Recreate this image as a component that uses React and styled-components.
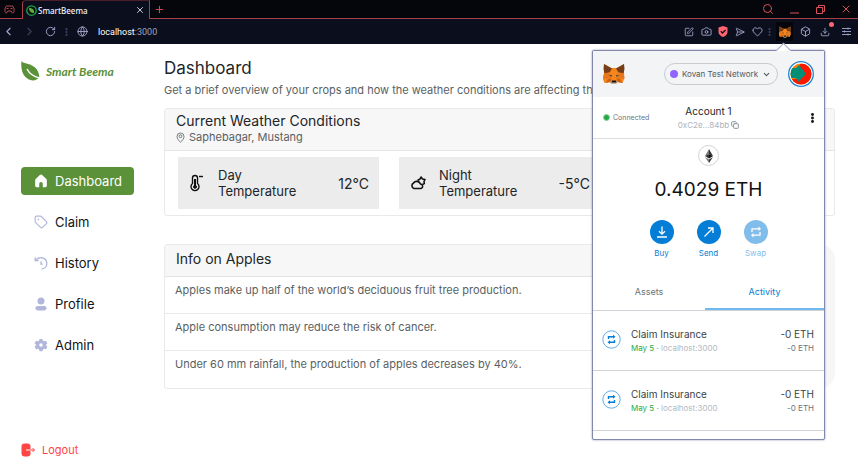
import React from "react";
import styled, { createGlobalStyle, css } from "styled-components";
import {
  Search, Copy, X, Plus, ChevronLeft, ChevronRight, ChevronDown, RotateCw,
  Globe, SquarePen, Camera, SendHorizontal, Heart, Box, Download, Tag,
} from "lucide-react";

const Global = createGlobalStyle`
  * { box-sizing: border-box; }
  body { margin: 0; background: #fff; font-family: Inter, "Open Sans", sans-serif; color: #212529; }
  button { font: inherit; color: inherit; background: none; border: 0; padding: 0; margin: 0; cursor: pointer; }
  a { color: inherit; text-decoration: none; }
  h1, h2, p, ul, dl, dd, dt { margin: 0; padding: 0; font-weight: 400; }
  ul { list-style: none; }
  svg { display: block; flex: none; }
`;

const Page = styled.div`
  position: relative;
  display: flex;
  flex-direction: column;
  min-height: 100vh;
`;

/* ---------- browser chrome ---------- */

const TabStrip = styled.div`
  display: flex;
  height: 19px;
  background: #05060b;
  font-family: "Noto Sans", sans-serif;
`;

const Workspace = styled.button`
  && { width: 22px; padding-right: 4px; border-bottom: 1px solid #a8404a; }
  display: grid;
  place-items: center;
`;

const Tab = styled.div`
  display: flex;
  align-items: center;
  gap: 1px;
  width: 128px;
  padding: 0 4px 0 3px;
  background: #0b0e1c;
  border: 1px solid #a8404a;
  border-top-color: #4b1f2a;
  border-bottom: 0;
  border-radius: 4px 0 0 0;
  color: #f2f2f6;
  font-size: 8px;
  font-weight: 500;
`;

const TabTitle = styled.span`
  flex: 1;
`;

const StripRest = styled.div`
  display: flex;
  flex: 1;
  align-items: center;
  justify-content: space-between;
  padding: 0 6px 0 3px;
  border-bottom: 1px solid #a8404a;
  color: #d9505c;
`;

const WindowButtons = styled.div`
  display: flex;
  gap: 14px;
`;

const IconButton = styled.button`
  display: grid;
  place-items: center;
  width: ${(p) => p.$w || 12}px;
  height: 16px;
`;

const Toolbar = styled.div`
  display: flex;
  align-items: center;
  justify-content: space-between;
  height: 25px;
  padding: 0 4px 0 2px;
  background: #0b0e1c;
  color: #a3a9cf;
`;

const ToolGroup = styled.div`
  display: flex;
  align-items: center;
  gap: ${(p) => p.$gap || 0}px;
`;

const Address = styled.span`
  margin-left: 1px;
  font: 9px Roboto, sans-serif;
  color: #9da2c4;
  b { font-weight: 400; color: #fff; }
`;

const Badge = styled.span`
  position: relative;
  display: grid;
  place-items: center;
  &::after {
    content: "";
    position: absolute;
    top: -5px;
    right: -4px;
    width: 5px;
    height: 5px;
    border-radius: 50%;
    background: #ff6470;
  }
`;

const FoxSlot = styled.button`
  && { background: #05060b; }
  display: grid;
  place-items: center;
  width: 17px;
  height: 19px;
`;

/* ---------- application ---------- */

const Layout = styled.div`
  display: grid;
  grid-template-columns: 164px 1fr;
  flex: 1;
`;

const Sidebar = styled.aside`
  display: flex;
  flex-direction: column;
  align-items: flex-start;
  padding: 16px 0 16px 21px;
`;

const Brand = styled.a`
  display: flex;
  align-items: center;
  gap: 6px;
  height: 22px;
  margin-bottom: 85px;
  color: #5a9139;
  font: italic 700 12px Lato, sans-serif;
`;

const Nav = styled.nav`
  display: flex;
  flex-direction: column;
  gap: 13px;
`;

const NavLink = styled.a`
  display: flex;
  align-items: center;
  gap: 7px;
  width: 113px;
  height: 28px;
  padding-left: 13px;
  border-radius: 4px;
  font-size: 13px;
  color: #111418;
  svg { color: #b1b7dc; }
  ${(p) => p.$active && css`
    background: #5a9139;
    color: #fff;
    svg { color: #fff; }
  `}
`;

const Logout = styled.button`
  && { color: #ff4545; font-size: 11px; }
  display: flex;
  align-items: center;
  gap: 7px;
  margin-top: auto;
  height: 20px;
`;

const Main = styled.main`
  min-width: 0;
  padding: 12px 23px 0 0;
`;

const Title = styled.h1`
  font-size: 17px;
  line-height: 24px;
`;

const Lead = styled.p`
  margin-bottom: 8px;
  font-size: 11px;
  line-height: 20px;
  color: #5a5f63;
  white-space: nowrap;
  overflow: hidden;
`;

const Card = styled.section`
  border: 1px solid #e9e9e9;
  border-radius: 3px;
  background: #fff;
`;

const CardHead = styled.header`
  padding: 3px 11px 6px;
  background: #f7f7f7;
  border-bottom: 1px solid #e4e4e4;
`;

const CardTitle = styled.h2`
  font-size: 14px;
  line-height: 18px;
`;

const InfoTitle = styled(CardTitle)`
  line-height: 22px;
`;

const Place = styled.p`
  display: flex;
  align-items: center;
  gap: 4px;
  font-size: 11px;
  line-height: 14px;
  color: #5a5f63;
`;

const Tiles = styled.div`
  display: grid;
  grid-template-columns: repeat(3, 1fr);
  gap: 20px;
  padding: 6px 13px;
`;

const Tile = styled.dl`
  display: flex;
  align-items: center;
  height: 52px;
  padding: 0 10px;
  background: #ececec;
  dt { flex: 1; margin-left: 12px; font-size: 13px; line-height: 16px; }
  dd { font-size: 14px; }
`;

const Lower = styled.div`
  display: grid;
  grid-template-columns: 2fr 1fr;
  gap: 20px;
  margin-top: 28px;
`;

const Facts = styled.ul`
  li {
    height: 37px;
    padding: 5px 10px;
    font-size: 11px;
    line-height: 16px;
    color: #5a5f63;
  }
  li:not(:last-child) { border-bottom: 1px solid #e9e9e9; }
`;

const SidePanel = styled.div`
  border-radius: 16px;
  background: #f6f6f6;
`;

/* ---------- wallet popup ---------- */

const Popup = styled.section`
  position: absolute;
  top: 50px;
  right: 33px;
  width: 233px;
  border: 1px solid #8187ad;
  border-radius: 2px;
  background: #fff;
  box-shadow: 0 0 2px #8187ad;
  &::before {
    content: "";
    position: absolute;
    top: -6px;
    right: 35px;
    width: 10px;
    height: 10px;
    background: #fff;
    border: solid #a3a8c6;
    border-width: 1px 0 0 1px;
    transform: rotate(45deg);
  }
`;

const PopupHead = styled.header`
  position: relative;
  display: flex;
  align-items: center;
  height: 46px;
  padding: 0 10px;
  background: #f2f4f6;
`;

const Network = styled.button`
  && {
    display: flex;
    align-items: center;
    justify-content: space-between;
    width: 114px;
    height: 22px;
    margin: 0 10px 0 auto;
    padding: 0 6px 0 5px;
    border: 1px solid #c8cbd0;
    border-radius: 11px;
    font-size: 8px;
    color: #535a61;
  }
  &::before {
    content: "";
    width: 8px;
    height: 8px;
    border-radius: 50%;
    background: #9064ff;
  }
`;

const Account = styled.div`
  display: grid;
  grid-template-columns: 60px 1fr 60px;
  align-items: center;
  height: 42px;
  padding: 0 10px;
  border-bottom: 1px solid #d9dce0;
`;

const Connected = styled.span`
  display: flex;
  align-items: center;
  gap: 3px;
  font-size: 7px;
  color: #6a737d;
  &::before {
    content: "";
    width: 5px;
    height: 5px;
    border: 1px solid #8bd69c;
    border-radius: 50%;
    background: #28a745;
  }
`;

const AccountName = styled.button`
  && { font-size: 10px; line-height: 15px; color: #24272a; }
  small {
    display: flex;
    align-items: center;
    justify-content: center;
    gap: 2px;
    font-size: 8px;
    line-height: 13px;
    color: #aeb3ba;
  }
  small svg { color: #8a9199; }
`;

const MoreButton = styled.button`
  justify-self: end;
`;

const Overview = styled.div`
  display: flex;
  flex-direction: column;
  align-items: center;
  padding-top: 6px;
`;

const Coin = styled.span`
  display: grid;
  place-items: center;
  width: 21px;
  height: 21px;
  border: 1px solid #cfd2d6;
  border-radius: 50%;
`;

const Balance = styled.p`
  margin-top: 8px;
  font-size: 19px;
  line-height: 32px;
  color: #111;
`;

const Actions = styled.div`
  display: flex;
  justify-content: center;
  gap: 7px;
  margin-top: 14px;
`;

const Action = styled.button`
  && {
    display: flex;
    flex-direction: column;
    align-items: center;
    gap: 3px;
    width: 40px;
    font-size: 8px;
    line-height: 12px;
    color: #037dd6;
    opacity: ${(p) => (p.disabled ? 0.5 : 1)};
  }
  span {
    display: grid;
    place-items: center;
    width: 24px;
    height: 24px;
    border-radius: 50%;
    background: #037dd6;
    color: #fff;
  }
`;

const Tabs = styled.div`
  display: grid;
  grid-template-columns: 112px 1fr;
  margin-top: 17px;
  border-bottom: 1px solid #cfd2d6;
`;

const TabButton = styled.button`
  && {
    height: 34px;
    padding-bottom: 2px;
    font-size: 9px;
    color: ${(p) => (p.$active ? "#037dd6" : "#6a737d")};
    border-bottom: 2px solid ${(p) => (p.$active ? "#6fb9ee" : "transparent")};
  }
`;

const Entry = styled.li`
  display: flex;
  align-items: flex-start;
  height: 60px;
  padding: 16px 10px 0 9px;
  border-bottom: 1px solid #cfd2d6;
  & > svg { margin-top: 3px; }
`;

const EntryText = styled.div`
  flex: 1;
  margin-left: 10px;
  font-size: 10px;
  line-height: 15px;
  color: #3a3f44;
  small { display: block; font-size: 8px; line-height: 13px; color: #b4b8be; }
  em { font-style: normal; color: #28a745; }
`;

const EntryAmount = styled(EntryText)`
  flex: none;
  text-align: right;
  small { color: #6a737d; }
`;

const PopupFoot = styled.div`
  height: 8px;
`;

/* ---------- drawings ---------- */

const Fox = ({ size }) => (
  <svg width={size} height={size} viewBox="0 0 22 22" aria-hidden="true">
    <path fill="#f6851b" d="M1 1 8 5h6l7-4v9l.5 5-2 5-4.500-1-3 2h-3l-3-2-4.500 1-2-5L1 10z" />
    <path fill="#763d16" d="M1 1 9 5.500 6.500 9.500 1.500 10.500.5 6zM21 1l-8 4.500 2.500 4 5 1 1-4.500z" />
    <path fill="#e4761b" d="m6 9.500 2.500 6H.5L2 10zM16 9.500l-2.500 6h8L20 10z" />
    <path fill="#cd6116" d="m8.500 15.500-1 3.500-5 .9L5 16zM13.500 15.500l1 3.500 5 .9L17 16z" />
    <path fill="#3a3f4c" d="m6 12.500 2.500-.8.500 2zM16 12.500l-2.500-.8-.5 2z" />
    <path fill="#c0ad9e" d="m7 18 2 .5h4l2-.5-2 3H9z" />
    <path fill="#161616" d="M9 17.500h4l.5 2h-5z" />
  </svg>
);

const Pad = () => (
  <svg width="11" height="9" viewBox="0 0 22 18" fill="none" stroke="#b8474f" strokeWidth="2" aria-hidden="true">
    <path d="M5 2h12l3 5v6c0 2-1 3-3 3l-3-4H8l-3 4c-2 0-3-1-3-3V7z" />
    <path d="M5 7h4M13 7h4" />
  </svg>
);

const Leaf = () => (
  <svg width="19" height="20" viewBox="0 0 19 20" aria-hidden="true">
    <path fill="#5a9139" d="M.5 0C2 2.500 6 2 10 4c5 2.300 8 6 8.300 12-2 3-5.500 4.200-9 3C3.500 17-.8 11 .5 0z" />
    <path d="M6 8c2 4 6 7.500 12.500 9" stroke="#fff" strokeWidth="1.500" fill="none" />
  </svg>
);

const Favicon = () => (
  <svg width="11" height="11" viewBox="0 0 22 22" aria-hidden="true">
    <circle cx="11" cy="11" r="9.500" fill="#07120c" stroke="#1fa84f" strokeWidth="2.500" />
    <path fill="#5fae3c" d="M6 6c7 0 11 3 10 10C10 16 6 13 6 6z" />
  </svg>
);

const Shield = () => (
  <svg width="10" height="11" viewBox="0 0 20 22" aria-hidden="true">
    <path fill="#ff6470" d="m10 0 9 3v9c0 5-4 8-9 10-5-2-9-5-9-10V3z" />
    <path d="m5.500 10.500 3.500 3.500 6-6" fill="none" stroke="#0b0e1c" strokeWidth="2.500" />
  </svg>
);

const Sliders = () => (
  <svg width="9" height="9" viewBox="0 0 18 18" stroke="currentColor" strokeWidth="1.800" aria-hidden="true">
    <path d="M0 3h18M0 9h18M0 15h18M12 1v4M5 7v4M12 13v4" />
  </svg>
);

const Dots = ({ size, color }) => (
  <svg width="3" height={size} viewBox="0 0 3 10" fill={color} aria-hidden="true">
    <circle cx="1.500" cy="1.500" r="1.400" />
    <circle cx="1.500" cy="5" r="1.400" />
    <circle cx="1.500" cy="8.500" r="1.400" />
  </svg>
);

const Home = () => (
  <svg width="14" height="14" viewBox="0 0 24 24" fill="currentColor" aria-hidden="true">
    <path d="M10 1.800 2.800 8.500C2.300 9 2 9.800 2 10.500V20c0 1.500 1 2.500 2.500 2.500H9v-6a3 3 0 0 1 6 0v6h4.500c1.500 0 2.500-1 2.500-2.500v-9.500c0-.7-.3-1.500-.8-2L14 1.800a3 3 0 0 0-4 0z" />
  </svg>
);

const HistoryIcon = () => (
  <svg width="14" height="14" viewBox="0 0 24 24" fill="none" stroke="currentColor" strokeWidth="2.200" aria-hidden="true">
    <path d="M2 2v6h6M3 8c2.500-4 6-5.500 10-5 5 .8 9 4.500 9 10 0 5-4 9-9 9.500" />
    <path d="M12 9v5h3" />
  </svg>
);

const Person = () => (
  <svg width="14" height="14" viewBox="0 0 24 24" fill="currentColor" aria-hidden="true">
    <circle cx="12" cy="7" r="6" />
    <rect x="2.500" y="15.500" width="19" height="7.500" rx="3.700" />
  </svg>
);

const Gear = () => (
  <svg width="14" height="14" viewBox="0 0 24 24" fill="currentColor" aria-hidden="true">
    <path fillRule="evenodd" d="M9.500 1.500h5l.8 3 2.200 1.200 3-.8 2.500 4.200-2.200 2.200v1.400l2.200 2.200-2.500 4.200-3-.8-2.200 1.200-.8 3h-5l-.8-3-2.200-1.200-3 .8L1 14.900l2.200-2.200v-1.400L1 9.100l2.500-4.200 3 .8 2.200-1.200zM12 9a3 3 0 1 0 0 6 3 3 0 0 0 0-6z" />
  </svg>
);

const Exit = () => (
  <svg width="14" height="14" viewBox="0 0 28 28" fill="none" aria-hidden="true">
    <rect x="1" y="1" width="18" height="26" rx="6" fill="#ff4545" />
    <path d="M10 14h9" stroke="#fff" strokeWidth="2" />
    <path d="M19 14h8m-4-4 4 4-4 4" stroke="#ff4545" strokeWidth="2" />
  </svg>
);

const Pin = () => (
  <svg width="9" height="11" viewBox="0 0 18 22" fill="none" stroke="#5a5f63" strokeWidth="1.600" aria-hidden="true">
    <path d="M9 20.500C5 17 2 13 2 9a7 7 0 0 1 14 0c0 4-3 8-7 11.500z" />
    <circle cx="9" cy="8.500" r="2.800" />
  </svg>
);

const Thermometer = () => (
  <svg width="18" height="18" viewBox="0 0 18 18" fill="none" stroke="#111" aria-hidden="true">
    <path d="M4.500 9.500V4a2.500 2.500 0 0 1 5 0v5.500a4 4 0 1 1-5 0z" strokeWidth="1.400" />
    <path d="M7 5v8" strokeWidth="2" />
    <circle cx="7" cy="12.800" r="1.500" fill="#111" />
    <path d="M11 2.500h4" strokeWidth="1.400" />
  </svg>
);

const CloudSun = () => (
  <svg width="18" height="18" viewBox="0 0 18 18" fill="none" stroke="#111" strokeWidth="1.600" strokeLinejoin="round" aria-hidden="true">
    <path d="M5 14.500a3 3 0 0 1-.5-5.500A4 4 0 0 1 11.500 10a2.300 2.300 0 0 1 .5 4.500z" />
    <path d="M8.500 6.500 11 5l1-2 1.500 2 2.500.5-1 2 .3 2-2 1" />
  </svg>
);

const Avatar = () => (
  <svg width="26" height="26" viewBox="0 0 26 26" aria-label="Account avatar" role="img">
    <clipPath id="avatar"><circle cx="13" cy="13" r="10.500" /></clipPath>
    <circle cx="13" cy="13" r="12.300" fill="#fff" stroke="#1b84d8" strokeWidth="1.300" />
    <g clipPath="url(#avatar)">
      <path fill="#fa7f00" d="M0 0h26v26H0z" />
      <path fill="#fb1800" d="m12 3 5-1 9 9v15H7l-4-8h7z" />
      <path fill="#018e76" d="M0 7h8l3-3 7 9-8 8-2-4H0z" />
    </g>
  </svg>
);

const Ether = () => (
  <svg width="10" height="14" viewBox="0 0 10 14" aria-hidden="true">
    <path fill="#777" d="M5 0 1 7l4-2z" />
    <path fill="#343434" d="m5 0 4 7-4-2z" />
    <path fill="#343434" d="m1 7 4-2v4.500z" />
    <path fill="#111" d="m9 7-4-2v4.500z" />
    <path fill="#777" d="M1 8l4 2.500V14z" />
    <path fill="#343434" d="M9 8l-4 2.500V14z" />
  </svg>
);

const BuyIcon = () => (
  <svg width="12" height="12" viewBox="0 0 12 12" fill="none" stroke="currentColor" strokeWidth="1.300" aria-hidden="true">
    <path d="M6 .5v7.500M3 5.200l3 3 3-3M1 11h10" />
  </svg>
);

const SendIcon = () => (
  <svg width="12" height="12" viewBox="0 0 12 12" fill="none" stroke="currentColor" strokeWidth="1.300" aria-hidden="true">
    <path d="m1.500 10.500 8.500-8.500M5 2h5v5" />
  </svg>
);

const SwapIcon = () => (
  <svg width="12" height="12" viewBox="0 0 12 12" aria-hidden="true">
    <path d="M2 6V2.800h7.500M10 6v3.200H2.500" fill="none" stroke="currentColor" strokeWidth="1.300" />
    <path d="M8.500.5 11 2.800 8.500 5zM3.500 7 1 9.200l2.500 2.300z" fill="currentColor" />
  </svg>
);

const EntryIcon = () => (
  <svg width="19" height="19" viewBox="0 0 19 19" aria-hidden="true" color="#037dd6">
    <circle cx="9.500" cy="9.500" r="8.700" fill="#fff" stroke="#5cace6" />
    <path d="M6.500 9V6.800H12M12.500 10v2.300H7" fill="none" stroke="currentColor" strokeWidth="1.400" />
    <path d="m11 4.800 2.500 2-2.500 2zM8 10.300l-2.500 2 2.500 2z" fill="currentColor" />
  </svg>
);

const navItems = [
  { label: "Dashboard", Icon: Home },
  { label: "Claim", Icon: () => <Tag size={14} /> },
  { label: "History", Icon: HistoryIcon },
  { label: "Profile", Icon: Person },
  { label: "Admin", Icon: Gear },
];

const facts = [
  "Apples make up half of the world’s deciduous fruit tree production.",
  "Apple consumption may reduce the risk of cancer.",
  "Under 60 mm rainfall, the production of apples decreases by 40%.",
];

export default function App() {
  return (
    <Page>
      <Global />
      <TabStrip>
        <Workspace aria-label="Workspace"><Pad /></Workspace>
        <Tab>
          <Favicon />
          <TabTitle>SmartBeema</TabTitle>
          <IconButton $w={10} aria-label="Close tab"><X size={10} /></IconButton>
        </Tab>
        <StripRest>
          <IconButton aria-label="New tab"><Plus size={11} /></IconButton>
          <WindowButtons>
            <IconButton aria-label="Search"><Search size={12} /></IconButton>
            <IconButton aria-label="Minimize">
              <svg width="9" height="9" viewBox="0 0 9 9"><path d="M0 8h9" stroke="currentColor" /></svg>
            </IconButton>
            <IconButton aria-label="Restore">
              <svg width="9" height="9" viewBox="0 0 9 9" fill="none" stroke="currentColor"><path d="M.5 2.500h6v6h-6zM2.500 2.500v-2h6v6h-2" /></svg>
            </IconButton>
            <IconButton aria-label="Close window"><X size={12} /></IconButton>
          </WindowButtons>
        </StripRest>
      </TabStrip>

      <Toolbar>
        <ToolGroup $gap={9}>
          <IconButton aria-label="Back"><ChevronLeft size={13} /></IconButton>
          <IconButton aria-label="Forward"><ChevronRight size={13} color="#3d415c" /></IconButton>
          <IconButton aria-label="Reload"><RotateCw size={11} /></IconButton>
          <Dots size={8} color="#3d415c" />
          <Globe size={11} />
          <Address><b>localhost</b>:3000</Address>
        </ToolGroup>
        <ToolGroup $gap={5}>
          <IconButton aria-label="Edit"><SquarePen size={10} /></IconButton>
          <IconButton aria-label="Snapshot"><Camera size={11} /></IconButton>
          <IconButton aria-label="Protection"><Shield /></IconButton>
          <IconButton aria-label="Send page"><SendHorizontal size={10} /></IconButton>
          <IconButton aria-label="Favourite"><Heart size={11} /></IconButton>
          <Dots size={8} color="#3d415c" />
          <FoxSlot aria-label="Wallet"><Fox size={12} /></FoxSlot>
          <IconButton $w={14} aria-label="Extensions"><Box size={11} /></IconButton>
          <IconButton $w={16} aria-label="Downloads"><Badge><Download size={10} /></Badge></IconButton>
          <IconButton $w={16} aria-label="Settings"><Sliders /></IconButton>
        </ToolGroup>
      </Toolbar>

      <Layout>
        <Sidebar>
          <Brand href="#"><Leaf />Smart Beema</Brand>
          <Nav>
            {navItems.map(({ label, Icon }, i) => (
              <NavLink key={label} href="#" $active={i === 0}><Icon />{label}</NavLink>
            ))}
          </Nav>
          <Logout><Exit />Logout</Logout>
        </Sidebar>

        <Main>
          <Title>Dashboard</Title>
          <Lead>Get a brief overview of your crops and how the weather conditions are affecting them.</Lead>
          <Card>
            <CardHead>
              <CardTitle>Current Weather Conditions</CardTitle>
              <Place><Pin />Saphebagar, Mustang</Place>
            </CardHead>
            <Tiles>
              <Tile><Thermometer /><dt>Day<br />Temperature</dt><dd>12°C</dd></Tile>
              <Tile><CloudSun /><dt>Night<br />Temperature</dt><dd>-5°C</dd></Tile>
            </Tiles>
          </Card>
          <Lower>
            <Card>
              <CardHead><InfoTitle>Info on Apples</InfoTitle></CardHead>
              <Facts>{facts.map((f) => <li key={f}>{f}</li>)}</Facts>
            </Card>
            <SidePanel />
          </Lower>
        </Main>
      </Layout>

      <Popup aria-label="Wallet">
        <PopupHead>
          <Fox size={22} />
          <Network>Kovan Test Network<ChevronDown size={9} strokeWidth={3} /></Network>
          <Avatar />
        </PopupHead>
        <Account>
          <Connected>Connected</Connected>
          <AccountName>Account 1<small>0xC2e...84bb<Copy size={8} strokeWidth={3} /></small></AccountName>
          <MoreButton aria-label="Account options"><Dots size={10} color="#111" /></MoreButton>
        </Account>
        <Overview>
          <Coin><Ether /></Coin>
          <Balance>0.4029 ETH</Balance>
          <Actions>
            <Action><span><BuyIcon /></span>Buy</Action>
            <Action><span><SendIcon /></span>Send</Action>
            <Action disabled><span><SwapIcon /></span>Swap</Action>
          </Actions>
        </Overview>
        <Tabs role="tablist">
          <TabButton role="tab" aria-selected="false">Assets</TabButton>
          <TabButton role="tab" aria-selected="true" $active>Activity</TabButton>
        </Tabs>
        <ul>
          {[0, 1].map((i) => (
            <Entry key={i}>
              <EntryIcon />
              <EntryText>Claim Insurance<small><em>May 5 · </em>localhost:3000</small></EntryText>
              <EntryAmount>-0 ETH<small>-0 ETH</small></EntryAmount>
            </Entry>
          ))}
        </ul>
        <PopupFoot />
      </Popup>
    </Page>
  );
}
